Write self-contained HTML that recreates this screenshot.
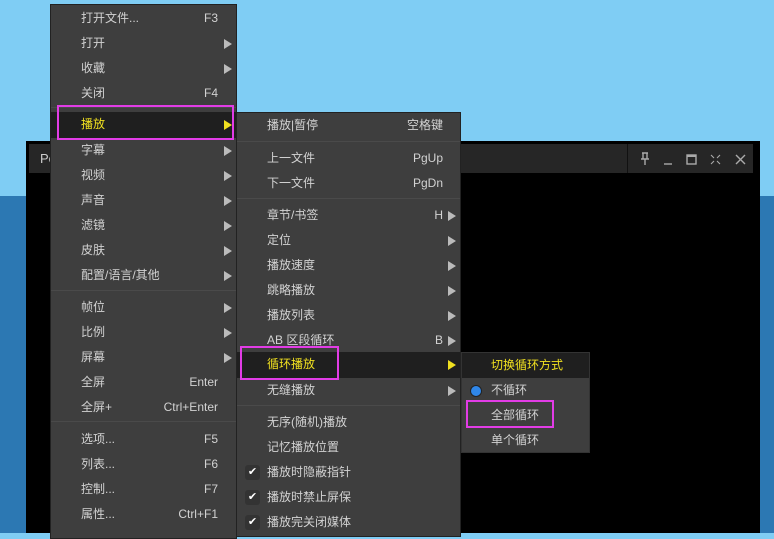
<!DOCTYPE html>
<html><head><meta charset="utf-8"><style>
*{margin:0;padding:0;box-sizing:border-box}
body{width:774px;height:533px;overflow:hidden;position:relative;background:#7fcdf4;font-family:"Liberation Sans","Noto Sans CJK SC",sans-serif;font-size:12px;color:#d2d2d2}
.abs{position:absolute}
.m{position:absolute;background:#3e3e3e;border:1px solid #222}
.it{position:absolute;left:0;right:0;height:25px;line-height:25px}
.it .t{position:absolute}
.it .k{position:absolute;text-align:right}
.ar{position:absolute;width:0;height:0;border-top:5px solid transparent;border-bottom:5px solid transparent;border-left:8px solid #bbb;top:8px}
.sep{position:absolute;left:0;right:0;height:1px;background:#262626;border-bottom:1px solid #4a4a4a}
.hl{background:#1f1f1f;color:#f0e020}
.hl .ar{border-left-color:#f0e020}
.mag{position:absolute;border:2px solid #e23ce6}
.ck{position:absolute;left:8px;top:5px;width:15px;height:15px;background:#333;border-radius:3px;color:#fff;font-size:11px;line-height:15px;text-align:center}
</style></head><body>
<div class="abs" style="left:0;top:196px;width:774px;height:337px;background:#2c78b3"></div>
<div class="abs" style="left:26px;top:141px;width:734px;height:392px;background:#000"></div>
<div class="abs" style="left:29px;top:144px;width:724px;height:29px;background:#262626"></div>
<div class="abs" style="left:627px;top:144px;width:1px;height:29px;background:#111"></div>
<div class="abs" style="left:40px;top:151px;color:#ccc;font-size:13px">Po</div>
<svg class="abs" style="left:634px;top:150px" width="120" height="18" viewBox="0 0 120 18" fill="none" stroke="#aaa" stroke-width="1.4">
<path d="M8 3h6M9 3v6h4V3M7 9h8M11 9v6"/>
<path d="M30 14h8"/>
<rect x="53" y="5" width="9" height="9"/><path d="M53 6h9" stroke-width="2"/>
<path d="M77 5l3 3M86 5l-3 3M77 14l3-3M86 14l-3-3" stroke-width="1.1"/>
<path d="M102 5l9 9M111 5l-9 9"/>
</svg>

<!-- Menu 1 -->
<div class="m" style="left:50px;top:4px;width:187px;height:535px">
<div class="it" style="top:1px"><span class="t" style="left:30px">打开文件...</span><span class="k" style="right:18px">F3</span></div>
<div class="it" style="top:26px"><span class="t" style="left:30px">打开</span><i class="ar" style="right:4px"></i></div>
<div class="it" style="top:51px"><span class="t" style="left:30px">收藏</span><i class="ar" style="right:4px"></i></div>
<div class="it" style="top:76px"><span class="t" style="left:30px">关闭</span><span class="k" style="right:18px">F4</span></div>
<div class="sep" style="top:102px"></div>
<div class="it hl" style="top:107px;height:26px"><span class="t" style="left:30px">播放</span><i class="ar" style="right:4px"></i></div>
<div class="it" style="top:133px"><span class="t" style="left:30px">字幕</span><i class="ar" style="right:4px"></i></div>
<div class="it" style="top:158px"><span class="t" style="left:30px">视频</span><i class="ar" style="right:4px"></i></div>
<div class="it" style="top:183px"><span class="t" style="left:30px">声音</span><i class="ar" style="right:4px"></i></div>
<div class="it" style="top:208px"><span class="t" style="left:30px">滤镜</span><i class="ar" style="right:4px"></i></div>
<div class="it" style="top:233px"><span class="t" style="left:30px">皮肤</span><i class="ar" style="right:4px"></i></div>
<div class="it" style="top:258px"><span class="t" style="left:30px">配置/语言/其他</span><i class="ar" style="right:4px"></i></div>
<div class="sep" style="top:285px"></div>
<div class="it" style="top:290px"><span class="t" style="left:30px">帧位</span><i class="ar" style="right:4px"></i></div>
<div class="it" style="top:315px"><span class="t" style="left:30px">比例</span><i class="ar" style="right:4px"></i></div>
<div class="it" style="top:340px"><span class="t" style="left:30px">屏幕</span><i class="ar" style="right:4px"></i></div>
<div class="it" style="top:365px"><span class="t" style="left:30px">全屏</span><span class="k" style="right:18px">Enter</span></div>
<div class="it" style="top:390px"><span class="t" style="left:30px">全屏+</span><span class="k" style="right:18px">Ctrl+Enter</span></div>
<div class="sep" style="top:416px"></div>
<div class="it" style="top:422px"><span class="t" style="left:30px">选项...</span><span class="k" style="right:18px">F5</span></div>
<div class="it" style="top:447px"><span class="t" style="left:30px">列表...</span><span class="k" style="right:18px">F6</span></div>
<div class="it" style="top:472px"><span class="t" style="left:30px">控制...</span><span class="k" style="right:18px">F7</span></div>
<div class="it" style="top:497px"><span class="t" style="left:30px">属性...</span><span class="k" style="right:18px">Ctrl+F1</span></div>
</div>

<!-- Menu 2 -->
<div class="m" style="left:236px;top:112px;width:225px;height:425px">
<div class="it" style="top:0"><span class="t" style="left:30px">播放|暂停</span><span class="k" style="right:17px">空格键</span></div>
<div class="sep" style="top:28px"></div>
<div class="it" style="top:33px"><span class="t" style="left:30px">上一文件</span><span class="k" style="right:17px">PgUp</span></div>
<div class="it" style="top:58px"><span class="t" style="left:30px">下一文件</span><span class="k" style="right:17px">PgDn</span></div>
<div class="sep" style="top:85px"></div>
<div class="it" style="top:90px"><span class="t" style="left:30px">章节/书签</span><span class="k" style="right:17px">H</span><i class="ar" style="right:4px"></i></div>
<div class="it" style="top:115px"><span class="t" style="left:30px">定位</span><i class="ar" style="right:4px"></i></div>
<div class="it" style="top:140px"><span class="t" style="left:30px">播放速度</span><i class="ar" style="right:4px"></i></div>
<div class="it" style="top:165px"><span class="t" style="left:30px">跳略播放</span><i class="ar" style="right:4px"></i></div>
<div class="it" style="top:190px"><span class="t" style="left:30px">播放列表</span><i class="ar" style="right:4px"></i></div>
<div class="it" style="top:215px"><span class="t" style="left:30px">AB 区段循环</span><span class="k" style="right:17px">B</span><i class="ar" style="right:4px"></i></div>
<div class="it hl" style="top:239px;height:26px"><span class="t" style="left:30px">循环播放</span><i class="ar" style="right:4px"></i></div>
<div class="it" style="top:265px"><span class="t" style="left:30px">无缝播放</span><i class="ar" style="right:4px"></i></div>
<div class="sep" style="top:292px"></div>
<div class="it" style="top:297px"><span class="t" style="left:30px">无序(随机)播放</span></div>
<div class="it" style="top:322px"><span class="t" style="left:30px">记忆播放位置</span></div>
<div class="it" style="top:347px"><span class="ck">✔</span><span class="t" style="left:30px">播放时隐蔽指针</span></div>
<div class="it" style="top:372px"><span class="ck">✔</span><span class="t" style="left:30px">播放时禁止屏保</span></div>
<div class="it" style="top:397px"><span class="ck">✔</span><span class="t" style="left:30px">播放完关闭媒体</span></div>
</div>

<!-- Menu 3 -->
<div class="m" style="left:461px;top:352px;width:129px;height:101px;border-color:#333">
<div class="it hl" style="top:0;height:25px"><span class="t" style="left:29px">切换循环方式</span></div>
<div class="it" style="top:25px"><span class="abs" style="left:9px;top:8px;width:10px;height:10px;border-radius:50%;background:#2f86e8;box-shadow:0 0 0 1px #222"></span><span class="t" style="left:29px">不循环</span></div>
<div class="it" style="top:50px"><span class="t" style="left:29px">全部循环</span></div>
<div class="it" style="top:75px"><span class="t" style="left:29px">单个循环</span></div>
</div>

<div class="mag" style="left:57px;top:105px;width:177px;height:35px"></div>
<div class="mag" style="left:240px;top:346px;width:99px;height:34px"></div>
<div class="mag" style="left:466px;top:400px;width:88px;height:28px"></div>
</body></html>
